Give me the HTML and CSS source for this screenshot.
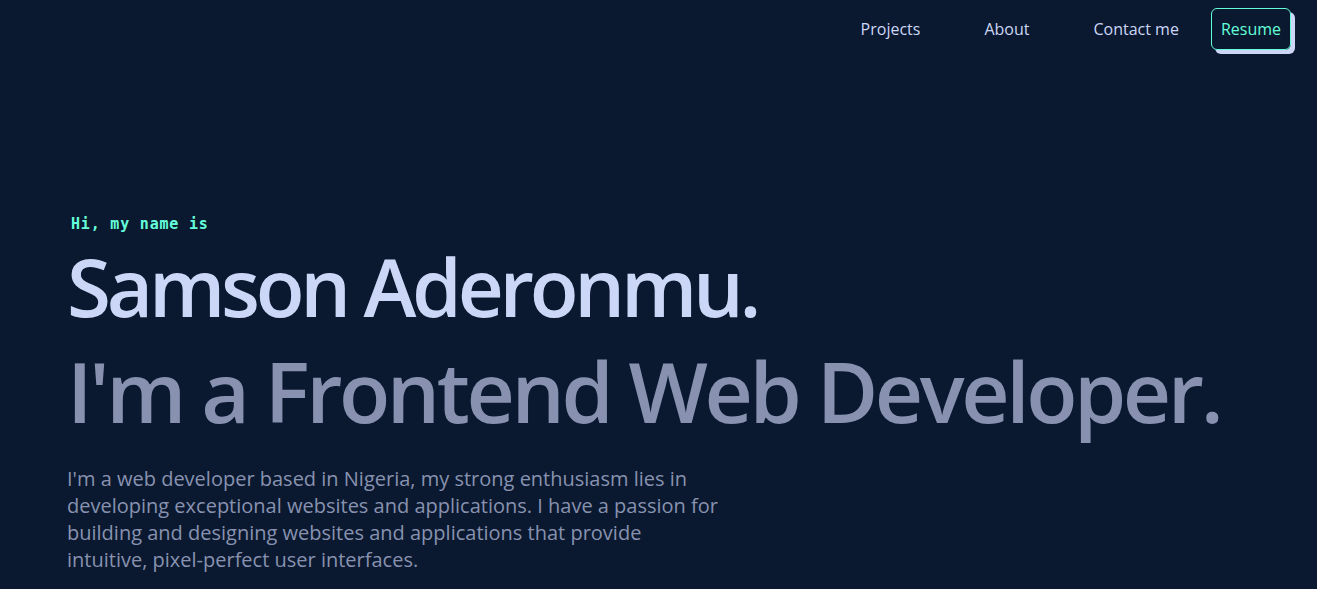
FILE: index.html
```html
<!DOCTYPE html>
<html lang="en">
<head>
<meta charset="utf-8">
<title>Samson Aderonmu</title>
<link rel="stylesheet" href="styles.css">
</head>
<body>
<header class="nav">
  <nav class="nav-links">
    <a class="nav-link" href="#projects">Projects</a>
    <a class="nav-link" href="#about">About</a>
    <a class="nav-link" href="#contact">Contact me</a>
    <a class="resume-btn" href="#resume">Resume</a>
  </nav>
</header>
<main class="hero">
  <p class="greeting">Hi, my name is</p>
  <h1 class="name">Samson Aderonmu.</h1>
  <h2 class="role">I'm a Frontend Web Developer.</h2>
  <p class="intro">I'm a web developer based in Nigeria, my strong enthusiasm lies in developing exceptional websites and applications. I have a passion for building and designing websites and applications that provide intuitive, pixel-perfect user interfaces.</p>
</main>
</body>
</html>
```
FILE: styles.css
```css
* { box-sizing: border-box; }
html, body { margin: 0; padding: 0; }
body {
  background: #0a192f;
  font-family: "Open Sans", "Noto Sans", sans-serif;
  color: #ccd6f6;
  height: 589px;
  overflow: hidden;
}
.nav {
  display: flex;
  justify-content: flex-end;
  padding: 8px 26px 0 0;
}
.nav-links {
  display: flex;
  align-items: center;
}
.nav-link {
  color: #ccd6f6;
  text-decoration: none;
  font-size: 16px;
  margin-right: 64px;
}
.nav-link:nth-child(3) { margin-right: 32px; }
.resume-btn {
  color: #64ffda;
  text-decoration: none;
  font-size: 16px;
  border: 1px solid #64ffda;
  border-radius: 6px;
  padding: 9px 9px;
  box-shadow: 4px 4px 0 #ccd6f6;
  height: 42px;
  display: flex;
  align-items: center;
}
.hero {
  padding: 0 0 0 67px;
  margin-top: 165px;
}
.greeting {
  font-family: "DejaVu Sans Mono", monospace;
  font-weight: bold;
  color: #64ffda;
  font-size: 15px;
  letter-spacing: 0.8px;
  margin: 0 0 0 4px;
}
.name {
  font-size: 80px;
  font-weight: 600;
  letter-spacing: -0.053em;
  margin: 3px 0 0;
  line-height: 100px;
  color: #ccd6f6;
}
.role {
  font-size: 84px;
  font-weight: 600;
  letter-spacing: -0.041em;
  margin: 2px 0 0;
  line-height: 106px;
  color: #8892b0;
  white-space: nowrap;
}
.intro {
  font-size: 20px;
  line-height: 27px;
  color: #8892b0;
  max-width: 652px;
  margin: 21px 0 0;
}
```
